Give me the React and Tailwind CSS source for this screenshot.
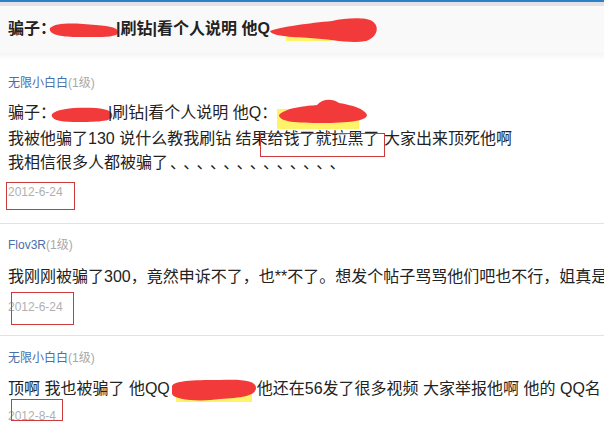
import React from 'react';

const FONT = { fontFamily: '"Liberation Sans", "Noto Sans CJK SC", "Noto Sans CJK JP", sans-serif' };

function Blob({ width, h = 24, children }) {
  return (
    <svg
      width={width}
      height={h}
      viewBox={`0 0 ${width} ${h}`}
      className="inline-block align-middle overflow-visible"
    >
      {children}
    </svg>
  );
}

function Username({ name }) {
  return (
    <div className="h-5 leading-5 text-[12px]">
      <span className="text-[#4a6ea8]">{name}</span>
      <span className="text-[#a8a8a8]">(1级)</span>
    </div>
  );
}

function DateLine({ date, box }) {
  return (
    <div className="relative h-5 leading-5 text-[12px] text-[#b0b0b0]">
      {date}
      <div className={`absolute border border-[#cc3b3b] ${box}`} />
    </div>
  );
}

export default function App() {
  return (
    <div className="w-[604px] h-[430px] overflow-hidden bg-white text-[#222]" style={FONT}>
      {/* top bars */}
      <div className="h-[2px] bg-[#2b80c5]" />
      <div className="h-[4px] bg-[#e2e2e6]" />
      <header className="h-[47px] bg-[#f9f9f9] px-2 flex items-center whitespace-nowrap">
        <h1 className="text-[16px] font-bold text-[#222]">
          骗子：
          <Blob width={60}>
            <path d="M-6 10 C 0 4, 20 5, 40 7 C 55 8, 63 10, 62 15 C 60 20, 40 19, 20 19 C 4 19, -8 16, -6 10 Z" fill="#f23a3a" />
          </Blob>
          |刷钻|看个人说明 他Q
          <Blob width={106} h={26}>
            <rect x="16" y="13" width="46" height="11" fill="#fff36a" />
            <path d="M0 14 C 10 10, 40 6, 62 4 C 75 1, 95 0, 102 4 C 110 9, 108 20, 96 24 C 80 27, 60 22, 40 21 C 20 20, 2 19, 0 14 Z" fill="#f23a3a" />
          </Blob>
        </h1>
      </header>
      <div className="h-[7px] bg-gradient-to-b from-[#f4f4f4] to-white" />

      {/* post 1 */}
      <div className="px-2 pt-[13px] pb-[21px] border-b border-[#e2e2e2]">
        <Username name="无限小白白" />
        <div className="mt-2 text-[16px] leading-6 whitespace-nowrap">
          <div>
            骗子：
            <Blob width={52}>
              <path d="M-4 12 C 2 6, 22 5, 40 6 C 52 7, 58 10, 56 15 C 54 20, 36 20, 18 20 C 2 20, -6 17, -4 12 Z" fill="#f23a3a" />
            </Blob>
            |刷钻|看个人说明 他Q：
            <Blob width={92} h={26}>
              <rect x="0" y="8" width="82" height="20" fill="#fff36a" />
              <path d="M2 14 C 10 6, 30 5, 40 4 C 45 -2, 55 -3, 62 2 C 75 4, 88 8, 90 14 C 90 20, 70 22, 45 22 C 20 22, 2 21, 2 14 Z" fill="#f23a3a" />
            </Blob>
          </div>
          <div>
            我被他骗了130 说什么教我刷钻 结果
            <span className="relative">
              给钱了就拉黑了
              <span className="absolute left-[-8px] top-[3px] w-[125px] h-[24px] border border-[#cc3b3b]" />
            </span>
            {' '}大家出来顶死他啊
          </div>
          <div>
            我相信很多人都被骗了<span className="pl-[2px] tracking-[5.3px]">、、、、、、、、、、、、、</span>
          </div>
        </div>
        <div className="mt-[7px]">
          <DateLine date="2012-6-24" box="left-[-2px] top-0 w-[69px] h-[28px]" />
        </div>
      </div>

      {/* post 2 */}
      <div className="px-2 pt-[11px] pb-[18px] border-b border-[#e2e2e2]">
        <Username name="Flov3R" />
        <div className="mt-[10px] text-[16px] leading-6 whitespace-nowrap">
          我刚刚被骗了300，竟然申诉不了，也**不了。想发个帖子骂骂他们吧也不行，姐真是
        </div>
        <div className="mt-2">
          <DateLine date="2012-6-24" box="left-[3px] top-[-5px] w-[63px] h-[33px]" />
        </div>
      </div>

      {/* post 3 */}
      <div className="px-2 pt-[12px]">
        <Username name="无限小白白" />
        <div className="mt-[9px] text-[16px] leading-6 whitespace-nowrap">
          顶啊 我也被骗了 他QQ
          <Blob width={87}>
            <rect x="6" y="14" width="76" height="10" fill="#fff36a" />
            <path d="M2 8 C 4 2, 30 2, 50 2 C 70 1, 86 2, 86 10 C 86 18, 70 20, 50 21 C 30 24, 4 22, 2 16 Z" fill="#f23a3a" />
          </Blob>
          他还在56发了很多视频 大家举报他啊 他的 QQ名
        </div>
        <div className="mt-[4px]">
          <DateLine date="2012-8-4" box="left-[3px] top-[-7px] w-[52px] h-[22px]" />
        </div>
      </div>
    </div>
  );
}
